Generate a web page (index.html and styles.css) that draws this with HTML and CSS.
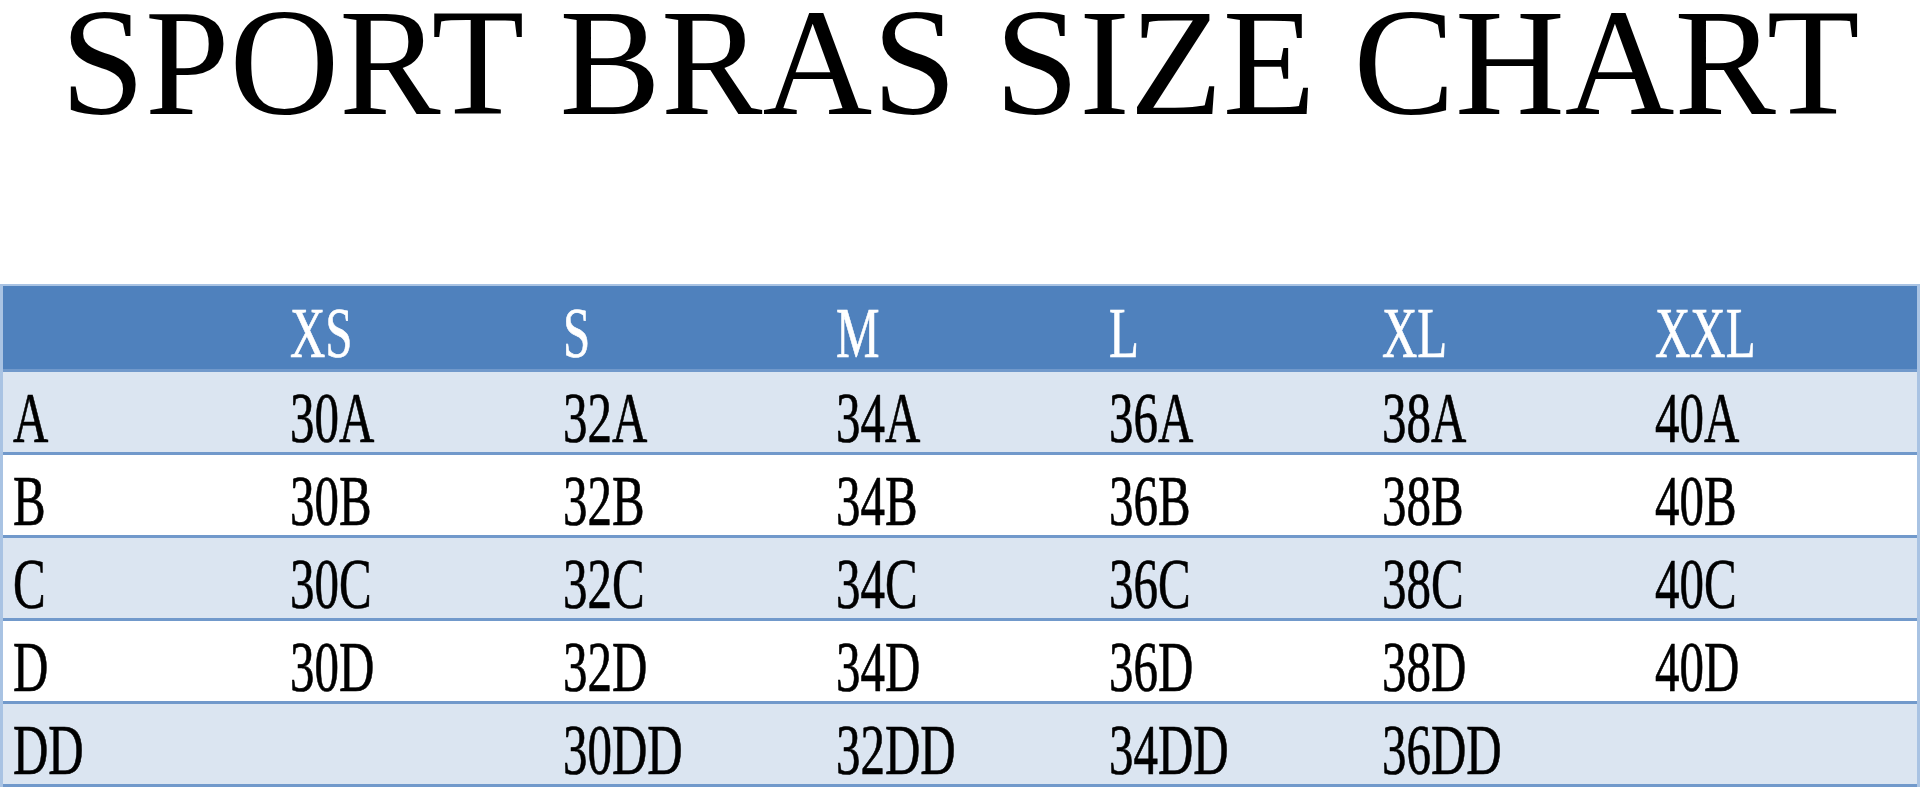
FILE: index.html
```html
<!DOCTYPE html>
<html lang="en">
<head>
<meta charset="utf-8">
<title>Sport Bras Size Chart</title>
<link rel="stylesheet" href="styles.css">
</head>
<body>
<h1 class="title">SPORT BRAS SIZE CHART</h1>
<table class="chart">
  <colgroup>
    <col class="c-first"><col class="c-mid"><col class="c-mid"><col class="c-mid"><col class="c-mid"><col class="c-mid"><col class="c-last">
  </colgroup>
  <thead>
    <tr class="head">
      <th><span class="t"></span></th>
      <th><span class="t">XS</span></th>
      <th><span class="t">S</span></th>
      <th><span class="t">M</span></th>
      <th><span class="t">L</span></th>
      <th><span class="t">XL</span></th>
      <th><span class="t">XXL</span></th>
    </tr>
  </thead>
  <tbody>
    <tr class="shade">
      <td><span class="t">A</span></td><td><span class="t">30A</span></td><td><span class="t">32A</span></td><td><span class="t">34A</span></td><td><span class="t">36A</span></td><td><span class="t">38A</span></td><td><span class="t">40A</span></td>
    </tr>
    <tr class="plain">
      <td><span class="t">B</span></td><td><span class="t">30B</span></td><td><span class="t">32B</span></td><td><span class="t">34B</span></td><td><span class="t">36B</span></td><td><span class="t">38B</span></td><td><span class="t">40B</span></td>
    </tr>
    <tr class="shade">
      <td><span class="t">C</span></td><td><span class="t">30C</span></td><td><span class="t">32C</span></td><td><span class="t">34C</span></td><td><span class="t">36C</span></td><td><span class="t">38C</span></td><td><span class="t">40C</span></td>
    </tr>
    <tr class="plain">
      <td><span class="t">D</span></td><td><span class="t">30D</span></td><td><span class="t">32D</span></td><td><span class="t">34D</span></td><td><span class="t">36D</span></td><td><span class="t">38D</span></td><td><span class="t">40D</span></td>
    </tr>
    <tr class="shade last">
      <td><span class="t">DD</span></td><td><span class="t"></span></td><td><span class="t">30DD</span></td><td><span class="t">32DD</span></td><td><span class="t">34DD</span></td><td><span class="t">36DD</span></td><td><span class="t"></span></td>
    </tr>
  </tbody>
</table>
</body>
</html>
```
FILE: styles.css
```css
html, body {
  margin: 0;
  padding: 0;
  background: #ffffff;
}

.title {
  margin: 0;
  font-family: "Liberation Serif", "Times New Roman", serif;
  font-weight: normal;
  font-size: 152px;
  line-height: 126px;
  color: #000000;
  text-align: center;
  white-space: nowrap;
}

.chart {
  margin-top: 158px;
  border-collapse: separate;
  border-spacing: 0;
  table-layout: fixed;
  width: 1917px;
  border-top: 2px solid #a9c3e3;
  border-left: 3px solid #a9c3e3;
  border-right: 3px solid #a9c3e3;
  border-bottom: 0;
  font-family: "Liberation Serif", "Times New Roman", serif;
  font-weight: normal;
  font-size: 72px;
  color: #000000;
}

.c-first { width: 277px; }
.c-mid { width: 273px; }
.c-last { width: 272px; }

.chart th,
.chart td {
  padding: 12px 0 0 10px;
  box-sizing: border-box;
  line-height: 68px;
  text-align: left;
  vertical-align: top;
  font-weight: normal;
  white-space: nowrap;
  overflow: visible;
  border-bottom: 3px solid #7199cb;
}

.chart td { height: 83px; }

.head th {
  background: #4f81bd;
  color: #ffffff;
  height: 86px;
  padding-top: 13px;
}

.shade td { background: #dbe5f1; }
.plain td { background: #ffffff; }

.t {
  display: inline-block;
  transform: scaleX(0.68);
  transform-origin: left center;
  -webkit-text-stroke: 0.7px currentColor;
}
```
